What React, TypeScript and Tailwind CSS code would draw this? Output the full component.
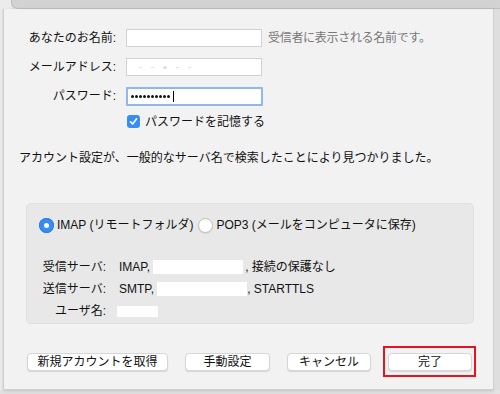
// Mail account setup sheet (macOS Mail, Japanese locale).
const font = "font-['Liberation_Sans','Noto_Sans_CJK_JP',sans-serif]";

function Field({ label, children }: { label: string; children: React.ReactNode }) {
  return (
    <div className="flex items-center h-[18px]">
      <div className="w-[112px] text-right text-[12px] leading-4 text-[#111]">{label}</div>
      <div className="ml-[10px] flex items-center">{children}</div>
    </div>
  );
}

function Radio({ checked }: { checked?: boolean }) {
  return checked ? (
    <span className="shrink-0 w-[15px] h-[15px] rounded-full bg-[#3a8cf5] flex items-center justify-center shadow-[inset_0_0_0_1px_#2f7de0]">
      <span className="w-[5px] h-[5px] rounded-full bg-white" />
    </span>
  ) : (
    <span className="shrink-0 block w-[15px] h-[15px] rounded-full bg-white border border-[#bdbdbd] shadow-[0_1px_1px_rgba(0,0,0,0.08)]" />
  );
}

function ServerRow({ label, children }: { label: string; children: React.ReactNode }) {
  return (
    <div className="flex items-center h-[22px] text-[12px] leading-4 text-[#111]">
      <div className="w-[79px] text-right">{label}</div>
      <div className="ml-[13px] flex items-center">{children}</div>
    </div>
  );
}

function MacButton({ label, width }: { label: string; width: string }) {
  return (
    <button
      className={`${width} h-[18px] rounded-[4px] bg-white border border-[#d6d6d6] shadow-[0_1px_1px_rgba(0,0,0,0.12)] text-[12px] leading-4 text-[#111] flex items-center justify-center`}
    >
      {label}
    </button>
  );
}

const dots = Array.from({ length: 10 });

export default function App() {
  return (
    <div className={`w-[500px] h-[394px] overflow-hidden bg-[#e3e3e3] ${font}`}>
      {/* window chrome behind the sheet */}
      <div className="flex h-[9px]">
        <div className="w-[11px] bg-[#ececec]" />
        <div className="flex-1 bg-[#d3d3d3] rounded-bl-[7px] border-b border-l border-[#bdbdbd]" />
      </div>

      <div className="flex">
        <div className="w-[3px] h-[381px] bg-[#ececec]" />
        <div className="w-[491px] h-[381px] bg-[#f2f2f2] border-x border-b border-[#cfcfcf] shadow-[0_1px_3px_rgba(0,0,0,0.15)]">
          {/* account form */}
          <div className="pt-[20px] flex flex-col gap-[11px]">
            <Field label="あなたのお名前:">
              <div className="w-[136px] h-[18px] bg-white border border-[#d2d2d2]" />
              <span className="ml-[6px] text-[12px] leading-4 text-[#777] tracking-[-0.3px]">受信者に表示される名前です。</span>
            </Field>
            <Field label="メールアドレス:">
              <div className="w-[136px] h-[18px] bg-white border border-[#d2d2d2] flex items-center pl-[12px] gap-[9px]">
                <span className="w-[3px] h-[1px] bg-[#e2e2e2]" />
                <span className="w-[3px] h-[1px] bg-[#e2e2e2]" />
                <span className="w-[4px] h-[3px] rounded-full bg-[#e0e0e0]" />
                <span className="w-[3px] h-[1px] bg-[#e2e2e2]" />
                <span className="w-[3px] h-[1px] bg-[#e2e2e2]" />
              </div>
            </Field>
            <Field label="パスワード:">
              <div className="w-[137px] h-[19px] bg-white border-2 border-[#8fb8ee] rounded-[1px] flex items-center pl-[3px] gap-[1px]">
                {dots.map((_, i) => (
                  <span key={i} className="w-[3px] h-[3px] rounded-full bg-[#111]" />
                ))}
                <span className="ml-[2px] w-[1px] h-[11px] bg-black" />
              </div>
            </Field>
          </div>

          <div className="mt-[10px] ml-[123px] flex items-center h-[13px]">
            <span className="w-[13px] h-[13px] rounded-[3px] bg-[#3a8cf5] flex items-center justify-center">
              <svg width="9" height="9" viewBox="0 0 9 9" fill="none">
                <path d="M1.5 4.8 L3.6 7 L7.6 1.8" stroke="white" strokeWidth="1.6" strokeLinecap="round" strokeLinejoin="round" />
              </svg>
            </span>
            <span className="ml-[5px] text-[12px] leading-4 text-[#111]">パスワードを記憶する</span>
          </div>

          <p className="mt-[22px] ml-[15px] text-[12px] leading-4 text-[#111]">
            アカウント設定が、一般的なサーバ名で検索したことにより見つかりました。
          </p>

          {/* detected server settings */}
          <div className="mt-[37px] ml-[22px] w-[448px] h-[121px] rounded-[5px] bg-[#e8e8e8] border border-[#e0e0e0]">
            <div className="pt-[13px] ml-[12px] flex items-center h-[29px] text-[12px] leading-4 text-[#111]">
              <Radio checked />
              <span className="ml-[3px]">IMAP (リモートフォルダ)</span>
              <span className="ml-[5px] flex"><Radio /></span>
              <span className="ml-[3px]">POP3 (メールをコンピュータに保存)</span>
            </div>
            <div className="mt-[23px]">
              <ServerRow label="受信サーバ:">
                <span>IMAP,</span>
                <span className="ml-[3px] w-[90px] h-[14px] bg-white" />
                <span className="ml-[2px]">, 接続の保護なし</span>
              </ServerRow>
              <ServerRow label="送信サーバ:">
                <span>SMTP,</span>
                <span className="ml-[3px] w-[90px] h-[14px] bg-white" />
                <span>, STARTTLS</span>
              </ServerRow>
              <ServerRow label="ユーザ名:">
                <span className="-ml-[2px] w-[41px] h-[11px] bg-white" />
              </ServerRow>
            </div>
          </div>

          {/* buttons */}
          <div className="mt-[22px] ml-[23px] flex items-center">
            <MacButton label="新規アカウントを取得" width="w-[141px]" />
            <div className="ml-[17px]"><MacButton label="手動設定" width="w-[85px]" /></div>
            <div className="ml-[17px]"><MacButton label="キャンセル" width="w-[84px]" /></div>
            <div className="ml-[12px] border-2 border-[#e5141f] pl-[3px] pr-[2px] pt-[5px] pb-[4px]">
              <MacButton label="完了" width="w-[84px]" />
            </div>
          </div>
        </div>
        <div className="flex-1 h-[381px] bg-[#dedede]" />
      </div>
    </div>
  );
}
